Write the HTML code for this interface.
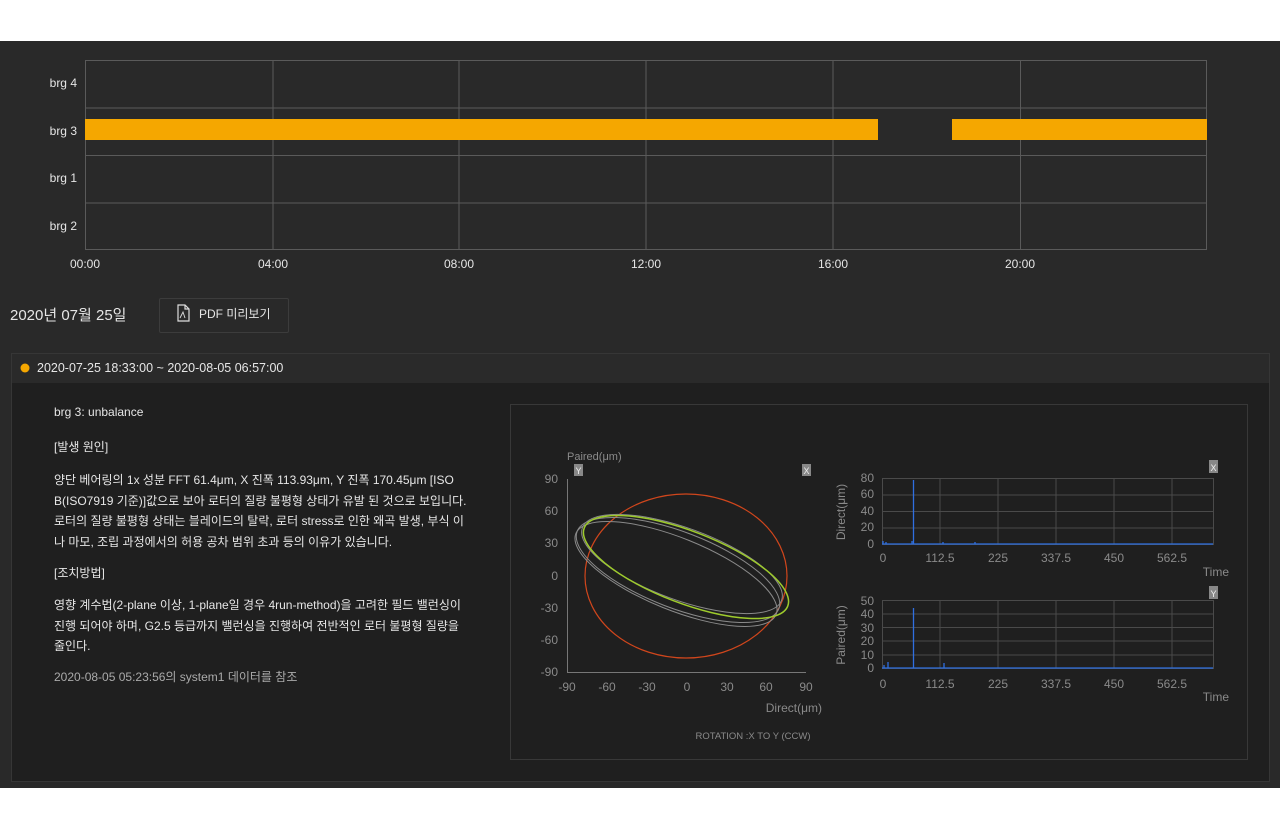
<!DOCTYPE html>
<html><head><meta charset="utf-8"><style>
body{margin:0;width:1280px;height:830px;background:#fff;position:relative;overflow:hidden;font-family:"Liberation Sans","Noto Sans CJK KR",sans-serif;}
.bg{position:absolute;left:0;top:41px;width:1280px;height:747px;background:#292929;}
.t{position:absolute;color:#e6e6e6;font-size:12px;white-space:nowrap;}
.p{position:absolute;left:54px;width:460px;color:#e6e6e6;font-size:12px;line-height:20.5px;white-space:nowrap;}
svg{position:absolute;left:0;top:0;}
</style></head><body>
<div class="bg"></div>
<div style="position:absolute;left:11px;top:353px;width:1257px;height:427px;background:#1f1f1f;border:1px solid #363636;"></div>
<div style="position:absolute;left:12px;top:354px;width:1257px;height:29px;background:#2a2a2a;"></div>
<div style="position:absolute;left:510px;top:404px;width:736px;height:354px;border:1px solid #383838;"></div>
<div style="position:absolute;left:159px;top:298px;width:128px;height:33px;border:1px solid #3c3c3c;border-radius:2px;"></div>
<svg width="1280" height="830" font-family="Liberation Sans, Noto Sans CJK KR, sans-serif">
<g stroke="#5a5a5a" fill="none" stroke-width="1">
<rect x="85.5" y="60.5" width="1121" height="189"/>
<line x1="85" y1="108" x2="1207" y2="108"/><line x1="85" y1="155.5" x2="1207" y2="155.5"/><line x1="85" y1="203" x2="1207" y2="203"/>
<line x1="273" y1="60" x2="273" y2="250"/><line x1="459" y1="60" x2="459" y2="250"/><line x1="646" y1="60" x2="646" y2="250"/><line x1="833" y1="60" x2="833" y2="250"/><line x1="1020.5" y1="60" x2="1020.5" y2="250"/>
</g>
<rect x="85" y="119" width="793" height="21" fill="#f5a700"/>
<rect x="952" y="119" width="255" height="21" fill="#f5a700"/>
<g fill="#e6e6e6" font-size="12" text-anchor="end">
<text x="77" y="87">brg 4</text><text x="77" y="135">brg 3</text><text x="77" y="182">brg 1</text><text x="77" y="230">brg 2</text></g>
<g fill="#e6e6e6" font-size="12" text-anchor="middle">
<text x="85" y="268">00:00</text><text x="273" y="268">04:00</text><text x="459" y="268">08:00</text><text x="646" y="268">12:00</text><text x="833" y="268">16:00</text><text x="1020" y="268">20:00</text></g>
<text x="10" y="320" fill="#e6e6e6" font-size="15">2020년 07월 25일</text>
<g stroke="#ddd" fill="none" stroke-width="1.2"><path d="M178 305h7l4 4v12h-11z M185 305v4h4"/><path d="M180 318l3-6 2 6" stroke-width="0.9"/></g>
<text x="199" y="318" fill="#e6e6e6" font-size="12">PDF 미리보기</text>
<circle cx="25" cy="368" r="4.5" fill="#f5a700"/>
<text x="37" y="372" fill="#e6e6e6" font-size="12.5">2020-07-25 18:33:00 ~ 2020-08-05 06:57:00</text>

<text x="567" y="460" fill="#8a8a8a" font-size="11">Paired(μm)</text>
<rect x="574" y="464" width="9" height="12" fill="#888"/><text x="578.5" y="474" fill="#eee" font-size="9" text-anchor="middle">Y</text>
<rect x="802" y="464" width="9" height="12" fill="#888"/><text x="806.5" y="474" fill="#eee" font-size="9" text-anchor="middle">X</text>
<g stroke="#777" stroke-width="1"><line x1="567.5" y1="479" x2="567.5" y2="673"/><line x1="567" y1="672.5" x2="806" y2="672.5"/></g>
<g fill="#8a8a8a" font-size="12" text-anchor="end">
<text x="558" y="483">90</text><text x="558" y="515">60</text><text x="558" y="547">30</text><text x="558" y="580">0</text><text x="558" y="612">-30</text><text x="558" y="644">-60</text><text x="558" y="676">-90</text></g>
<g fill="#8a8a8a" font-size="12" text-anchor="middle">
<text x="567" y="691">-90</text><text x="607" y="691">-60</text><text x="647" y="691">-30</text><text x="687" y="691">0</text><text x="727" y="691">30</text><text x="766" y="691">60</text><text x="806" y="691">90</text></g>
<text x="822" y="712" fill="#8a8a8a" font-size="12" text-anchor="end">Direct(μm)</text>
<text x="753" y="739" fill="#8a8a8a" font-size="9.5" text-anchor="middle">ROTATION :X TO Y (CCW)</text>
<ellipse cx="686" cy="576" rx="101" ry="82" fill="none" stroke="#d0461c" stroke-width="1.2"/>
<g fill="none" stroke="#8a8a8a" stroke-width="1">
<ellipse cx="678" cy="570" rx="108" ry="38" transform="rotate(21 678 570)"/>
<ellipse cx="676" cy="574" rx="108" ry="36" transform="rotate(22 676 574)"/>
<ellipse cx="682" cy="564" rx="106" ry="36" transform="rotate(20 682 564)"/>
</g>
<ellipse cx="686" cy="567" rx="109" ry="36" transform="rotate(21 686 567)" fill="none" stroke="#9ecb2c" stroke-width="1.5"/>

<g stroke="#4a4a4a" stroke-width="1" fill="none">
<rect x="882.5" y="478.5" width="331" height="66"/>
<line x1="882" y1="495" x2="1214" y2="495"/><line x1="882" y1="511.5" x2="1214" y2="511.5"/><line x1="882" y1="528" x2="1214" y2="528"/>
<line x1="940" y1="478" x2="940" y2="544"/><line x1="998" y1="478" x2="998" y2="544"/><line x1="1056" y1="478" x2="1056" y2="544"/><line x1="1114" y1="478" x2="1114" y2="544"/><line x1="1172" y1="478" x2="1172" y2="544"/>
<rect x="882.5" y="600.5" width="331" height="68"/>
<line x1="882" y1="614" x2="1214" y2="614"/><line x1="882" y1="627.5" x2="1214" y2="627.5"/><line x1="882" y1="641" x2="1214" y2="641"/><line x1="882" y1="655" x2="1214" y2="655"/>
<line x1="940" y1="600" x2="940" y2="668"/><line x1="998" y1="600" x2="998" y2="668"/><line x1="1056" y1="600" x2="1056" y2="668"/><line x1="1114" y1="600" x2="1114" y2="668"/><line x1="1172" y1="600" x2="1172" y2="668"/>
</g>
<g stroke="#2f6fe0" stroke-width="1.3" fill="none">
<path d="M882 544h331"/><path d="M883 544v-3M886 544v-2M912 544v-3M913.5 544V480M943 544v-2M975 544v-2"/>
<path d="M882 668h331"/><path d="M884 668v-3M888 668v-6M913.5 668V608M944 668v-5"/>
</g>
<rect x="1209" y="460" width="9" height="13" fill="#888"/><text x="1213.5" y="471" fill="#eee" font-size="9" text-anchor="middle">X</text>
<rect x="1209" y="586" width="9" height="13" fill="#888"/><text x="1213.5" y="597" fill="#eee" font-size="9" text-anchor="middle">Y</text>
<g fill="#8a8a8a" font-size="12" text-anchor="end">
<text x="874" y="482">80</text><text x="874" y="498">60</text><text x="874" y="515">40</text><text x="874" y="531">20</text><text x="874" y="548">0</text>
<text x="874" y="605">50</text><text x="874" y="618">40</text><text x="874" y="632">30</text><text x="874" y="645">20</text><text x="874" y="659">10</text><text x="874" y="672">0</text></g>
<g fill="#8a8a8a" font-size="12" text-anchor="middle">
<text x="883" y="562">0</text><text x="940" y="562">112.5</text><text x="998" y="562">225</text><text x="1056" y="562">337.5</text><text x="1114" y="562">450</text><text x="1172" y="562">562.5</text>
<text x="883" y="688">0</text><text x="940" y="688">112.5</text><text x="998" y="688">225</text><text x="1056" y="688">337.5</text><text x="1114" y="688">450</text><text x="1172" y="688">562.5</text></g>
<text x="1229" y="576" fill="#8a8a8a" font-size="12" text-anchor="end">Time</text>
<text x="1229" y="701" fill="#8a8a8a" font-size="12" text-anchor="end">Time</text>
<text transform="translate(845 512) rotate(-90)" fill="#8a8a8a" font-size="12" text-anchor="middle">Direct(μm)</text>
<text transform="translate(845 635) rotate(-90)" fill="#8a8a8a" font-size="12" text-anchor="middle">Paired(μm)</text>
</svg>
<div class="t" style="left:54px;top:405px;">brg 3: unbalance</div>
<div class="t" style="left:54px;top:438px;">[발생 원인]</div>
<div class="p" style="top:470px;">양단 베어링의 1x 성분 FFT 61.4μm, X 진폭 113.93μm, Y 진폭 170.45μm [ISO<br>B(ISO7919 기준)]값으로 보아 로터의 질량 불평형 상태가 유발 된 것으로 보입니다.<br>로터의 질량 불평형 상태는 블레이드의 탈락, 로터 stress로 인한 왜곡 발생, 부식 이<br>나 마모, 조립 과정에서의 허용 공차 범위 초과 등의 이유가 있습니다.</div>
<div class="t" style="left:54px;top:564px;">[조치방법]</div>
<div class="p" style="top:595px;">영향 계수법(2-plane 이상, 1-plane일 경우 4run-method)을 고려한 필드 밸런싱이<br>진행 되어야 하며, G2.5 등급까지 밸런싱을 진행하여 전반적인 로터 불평형 질량을<br>줄인다.</div>
<div class="t" style="left:54px;top:668px;color:#aaa;">2020-08-05 05:23:56의 system1 데이터를 참조</div>
</body></html>
